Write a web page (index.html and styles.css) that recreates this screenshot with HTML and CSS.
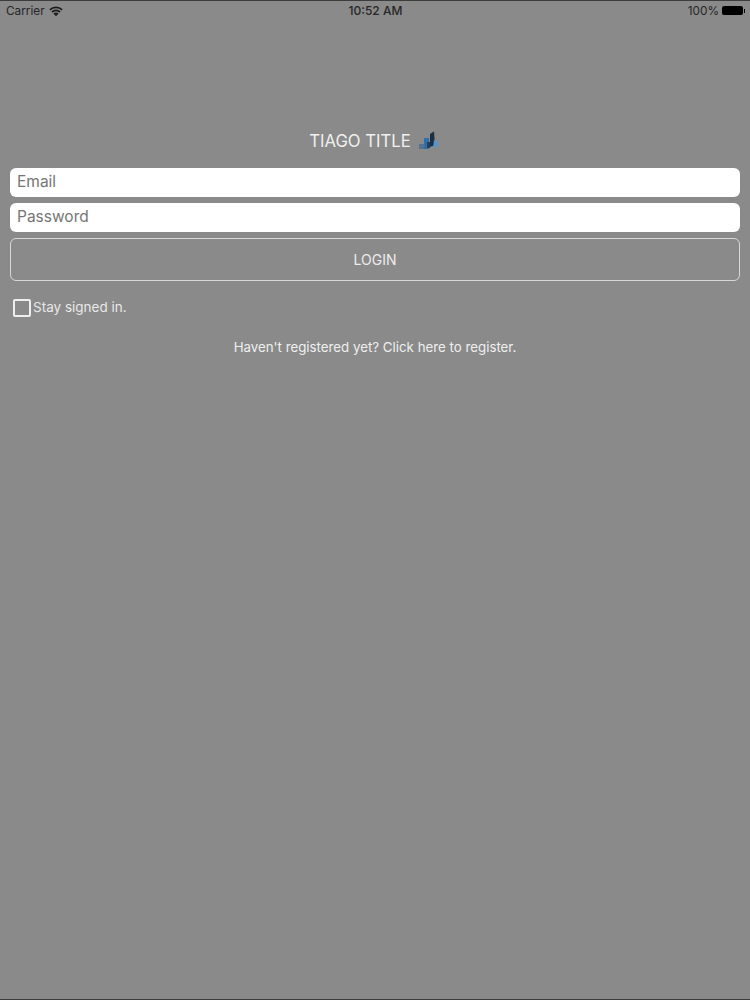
FILE: index.html
```html
<!DOCTYPE html>
<html lang="en">

<head>
    <meta charset="UTF-8">
    <meta name="viewport" content="width=device-width, initial-scale=1.0">
    <title>Login</title>
    <link rel="stylesheet" href="styles.css">
</head>

<body>
    <div class="screen">
        <div class="statusbar">
            <div class="status-left">
                <span>Carrier</span>
                <svg class="wifi" viewBox="0 0 14 10" width="14" height="10">
                    <path d="M0.3 3.3a9.4 9.4 0 0 1 13.4 0l-1.1 1.2a7.8 7.8 0 0 0-11.2 0z" fill="#1c1c1c"/>
                    <path d="M2.4 5.5a6.4 6.4 0 0 1 9.2 0l-1.1 1.2a4.8 4.8 0 0 0-7 0z" fill="#1c1c1c"/>
                    <path d="M4.5 7.7a3.4 3.4 0 0 1 5 0L7 10.2z" fill="#1c1c1c"/>
                </svg>
            </div>
            <span class="status-time">10:52 AM</span>
            <div class="status-right">
                <span>100%</span>
                <div class="battery"></div>
                <div class="battery-tip"></div>
            </div>
        </div>

        <div class="login">
            <div class="title">
                <span>TIAGO TITLE</span>
                <svg class="logo" viewBox="0 0 20 20" width="20" height="20">
                    <rect x="0" y="13" width="6" height="5" fill="#5a7288"/>
                    <rect x="5" y="7" width="5" height="11" fill="#2f6ea8"/>
                    <rect x="8" y="11" width="3" height="6" fill="#1f3f60"/>
                    <polygon points="11,3 15,0.5 16,14 11,16" fill="#1b2f44"/>
                    <polygon points="15,9 19,10 20,15 14,17" fill="#5b93c4"/>
                </svg>
            </div>

            <input class="field" type="text" placeholder="Email">
            <input class="field" type="password" placeholder="Password">
            <button class="login-button">LOGIN</button>

            <label class="stay">
                <span class="checkbox"></span>
                <span class="stay-text">Stay signed in.</span>
            </label>

            <p class="register">Haven't registered yet? Click here to register.</p>
        </div>
    </div>
</body>

</html>
```

FILE: styles.css
```css
body {
    font-family: "Inter", "Liberation Sans", sans-serif;
    margin: 0;
    padding: 0;
    background-color: #8a8a8a;
}

.screen {
    height: 1000px;
    box-sizing: border-box;
    border-top: 1px solid #3c3c3c;
    border-bottom: 1px solid #3c3c3c;
    overflow: hidden;
}

.statusbar {
    display: flex;
    justify-content: space-between;
    align-items: center;
    height: 19px;
    padding: 0 5px 0 6px;
    font-size: 11.8px;
    color: #262626;
}

.status-left,
.status-right {
    display: flex;
    align-items: center;
    width: 120px;
}

.status-left {
    gap: 4px;
}

.status-right {
    justify-content: flex-end;
    gap: 3px;
}

.status-time {
    font-weight: 500;
    font-size: 12px;
}

.battery {
    width: 21px;
    height: 9px;
    background-color: #000;
    border-radius: 2px;
}

.battery-tip {
    width: 1px;
    height: 4px;
    margin-left: -2px;
    background-color: #000;
}

.login {
    display: flex;
    flex-direction: column;
    padding: 0 10px;
}

.title {
    display: flex;
    justify-content: center;
    align-items: center;
    gap: 8px;
    margin-top: 110px;
    margin-bottom: 16px;
    padding-right: 2px;
    height: 22px;
    font-size: 16.7px;
    color: #f0f0f0;
}

.logo {
    filter: blur(0.6px);
}

.field {
    height: 29px;
    margin-bottom: 6px;
    padding: 0 7px 2px;
    box-sizing: border-box;
    border: none;
    border-radius: 6px;
    background-color: #fff;
    font-family: inherit;
    font-size: 15.5px;
}

.field::placeholder {
    color: #757575;
    opacity: 1;
}

.login-button {
    height: 43px;
    border: 1px solid #d8d8d8;
    border-radius: 6px;
    background: none;
    color: #ededed;
    font-family: inherit;
    font-size: 14px;
}

.stay {
    display: flex;
    align-items: center;
    gap: 2px;
    margin-top: 18px;
    margin-left: 3px;
    font-size: 13.5px;
    color: #e8e8e8;
}

.stay-text {
    margin-top: -2px;
}

.checkbox {
    width: 14px;
    height: 14px;
    border: 2px solid #efefef;
    border-radius: 2px;
}

.register {
    margin: 22px 0 0;
    text-align: center;
    font-size: 13.3px;
    color: #efefef;
}
```
